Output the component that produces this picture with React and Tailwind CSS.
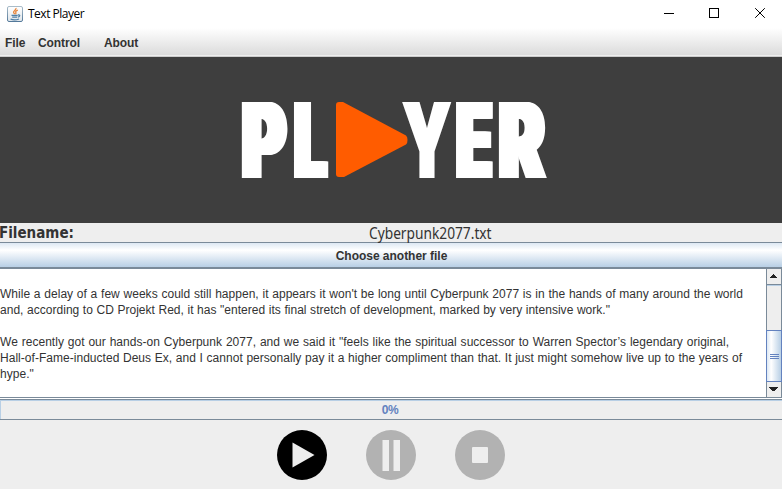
import React from "react";

const lines = [
  { text: "", cls: "w-px" },
  { text: "While a delay of a few weeks could still happen, it appears it won't be long until Cyberpunk 2077 is in the hands of many around the world", cls: "w-[743px]" },
  { text: "and, according to CD Projekt Red, it has \"entered its final stretch of development, marked by very intensive work.\"", cls: "w-[610px]" },
  { text: "", cls: "w-px" },
  { text: "We recently got our hands-on Cyberpunk 2077, and we said it \"feels like the spiritual successor to Warren Spector’s legendary original,", cls: "w-[729px]" },
  { text: "Hall-of-Fame-inducted Deus Ex, and I cannot personally pay it a higher compliment than that. It just might somehow live up to the years of", cls: "w-[742px]" },
  { text: "hype.\"", cls: "w-[34px]" },
];

const glyph = "block w-max origin-left font-['Inter',sans-serif] text-[104.5px] font-black leading-[76px] text-white ";
const heavy = "[text-shadow:3px_0_#fff,-3px_0_#fff,5px_0_#fff,-5px_0_#fff] ";
const light = "[text-shadow:2px_0_#fff,-2px_0_#fff] ";

function JavaIcon() {
  return (
    <svg className="h-4 w-4" viewBox="0 0 16 16" fill="none">
      <defs>
        <linearGradient id="jb" x1="0" y1="0" x2="0" y2="1">
          <stop offset="0" stopColor="#ffffff" />
          <stop offset="1" stopColor="#dfe5ea" />
        </linearGradient>
        <linearGradient id="jf" x1="0" y1="0" x2="0" y2="1">
          <stop offset="0" stopColor="#a9bcc9" />
          <stop offset="1" stopColor="#54799a" />
        </linearGradient>
      </defs>
      <rect x=".5" y=".5" width="15" height="15" rx="1.500" fill="url(#jb)" stroke="url(#jf)" />
      <path d="M9 2C9.600 4 6 4.800 6.600 6.400 6.800 7 7.500 7.400 7.600 8.300M10.800 4.200C8.600 5 8.300 5.800 8.900 6.600 9.200 7.100 8.900 7.600 8.500 8.300" stroke="#e8853a" strokeWidth="1.300" />
      <path d="M4.500 9.300h6.200M5.200 11.200h4.900M11 9c2.400-.5 2.200 1.700-.2 2.100M3.600 13.200c2 .7 6.400.6 8.400-.2" stroke="#4f7fa6" strokeWidth="1.300" />
    </svg>
  );
}

function Logo() {
  return (
    <div className="flex h-[166px] pl-[242px] pt-[45px]">
      <div className="w-[52px]"><span className={glyph + heavy + "scale-x-[0.640]"}>P</span></div>
      <div className="w-[42px]"><span className={glyph + heavy + "scale-x-[0.560]"}>L</span></div>
      <svg className="h-[76px] w-[72px] shrink-0" viewBox="336 102 72 76">
        <path d="M339 102h4l63 33.500q1.500 1 1.500 4.500t-1.500 4.500L344 177h-5q-3 0-3-3v-69q0-3 3-3z" fill="#ff5c00" />
      </svg>
      <div className="-ml-[6px] w-[54px]"><span className={glyph + light + "scale-x-[0.610]"}>Y</span></div>
      <div className="w-[43px]"><span className={glyph + heavy + "scale-x-[0.570]"}>E</span></div>
      <div className="w-[50px]"><span className={glyph + heavy + "scale-x-[0.650]"}>R</span></div>
    </div>
  );
}

function Scrollbar() {
  return (
    <svg className="h-[128px] w-4 shrink-0" viewBox="766 269 16 128" shapeRendering="crispEdges">
      <defs>
        <linearGradient id="thumb" x1="0" x2="1">
          <stop offset="0" stopColor="#dce8f4" />
          <stop offset=".3" stopColor="#ffffff" />
          <stop offset="1" stopColor="#b8cfe5" />
        </linearGradient>
      </defs>
      <rect x="766" y="269" width="16" height="128" fill="#eeeeee" />
      <rect x="766" y="269" width="1" height="128" fill="#7a8a99" />
      <rect x="781" y="269" width="1" height="128" fill="#7a8a99" />
      <rect x="767" y="284" width="15" height="1" fill="#7a8a99" />
      <rect x="767" y="285" width="14" height="1" fill="#b8cfe5" />
      <path d="M770 278h7v-1h-1v-1h-1v-1h-1v-1h-1v1h-1v1h-1v1h-1z" fill="#222" />
      <rect x="767" y="331" width="14" height="50" fill="url(#thumb)" />
      <path d="M766.500 330.500h15v51h-15z" fill="none" stroke="#6382bf" />
      <path d="M770 354.500h9M770 356.500h9M770 358.500h9" stroke="#6382bf" />
      <path d="M769 387h9v1h-1v1h-1v1h-1v1h-3v-1h-1v-1h-1v-1h-1z" fill="#222" />
    </svg>
  );
}

export default function App() {
  return (
    <div className="flex h-[489px] w-[782px] flex-col overflow-hidden bg-[#eeeeee] font-['Liberation_Sans',Arial,sans-serif] text-[12px] text-[#333333]">
      <header className="flex h-7 items-center bg-white pl-[7px]">
        <JavaIcon />
        <span className="ml-[5px] font-['Open_Sans',sans-serif] text-[12px] tracking-[-0.5px] text-black">Text Player</span>
        <svg className="ml-auto h-7 w-[138px]" viewBox="644 0 138 28" fill="none" stroke="#000">
          <path d="M664 13.500h10M709.500 8.500h9v9h-9z" shapeRendering="crispEdges" />
          <path d="M755.200 8.200l9.600 9.600M764.800 8.200l-9.600 9.600" />
        </svg>
      </header>
      <nav className="flex h-[29px] items-center border-b border-[#cccccc] bg-linear-to-b from-white to-[#dadada] pl-[5px] pt-[2px] font-bold tracking-[-0.1px] shadow-[inset_0_-1px_0_#eeeeee]">
        <span className="w-[33px]">File</span>
        <span className="w-[66px]">Control</span>
        <span>About</span>
      </nav>
      <div className="h-[166px] bg-[#3e3e3e]">
        <Logo />
      </div>
      <div className="flex h-[19px] items-center text-[15px] leading-[19px]">
        <span className="-ml-px w-[370px] pt-[2px] font-['DejaVu_Sans_Condensed','DejaVu_Sans',sans-serif] font-bold">Filename:</span>
        <span className="origin-left scale-x-[0.886] pt-px font-['Noto_Sans',sans-serif] text-[15.500px]">Cyberpunk2077.txt</span>
      </div>
      <button className="flex h-[27px] items-center justify-center border-t border-b-2 border-[#7a8a99] bg-[linear-gradient(to_bottom,#dde8f3_0%,#ffffff_30%,#b8cfe5_100%)] pt-[2px] pl-px font-bold tracking-[-0.02px]">
        Choose another file
      </button>
      <main className="flex h-[129px] border-b border-[#7a8a99] bg-white">
        <div className="flex-1 pt-[1px]">
          {lines.map((l, i) => (
            <p key={i} className={"h-4 whitespace-nowrap leading-4 tracking-[0.03px] [text-align-last:justify] " + l.cls}>{l.text}</p>
          ))}
        </div>
        <Scrollbar />
      </main>
      <div className="h-px bg-white" />
      <div className="flex h-[21px] items-center justify-center border-y border-[#7a8a99] pr-[2px] font-bold tracking-[-0.5px] text-[#6382bf] shadow-[inset_1px_1px_0_#b8cfe5]">
        0%
      </div>
      <footer className="flex flex-1 justify-center gap-[39px] pt-[10px]">
        <svg className="h-[50px] w-[50px]" viewBox="0 0 50 50"><circle cx="25" cy="25" r="25" fill="#000" /><path d="M15.500 12.500v25L37.500 25z" fill="#eee" /></svg>
        <svg className="h-[50px] w-[50px]" viewBox="0 0 50 50"><circle cx="25" cy="25" r="25" fill="#b2b2b2" /><path d="M16.500 10h6.500v31h-6.500zM27.500 10h6.500v31h-6.500z" fill="#eee" /></svg>
        <svg className="h-[50px] w-[50px]" viewBox="0 0 50 50"><circle cx="25" cy="25" r="25" fill="#b2b2b2" /><rect x="17" y="17" width="16" height="16" rx="1" fill="#eee" /></svg>
      </footer>
    </div>
  );
}
